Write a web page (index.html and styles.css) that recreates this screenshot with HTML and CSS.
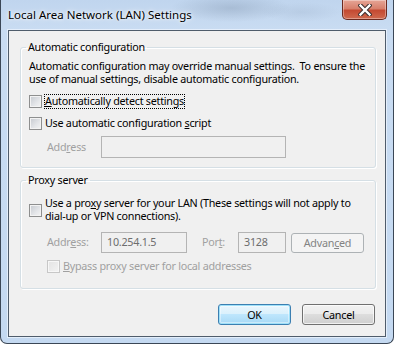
FILE: index.html
```html
<!DOCTYPE html>
<html>
<head>
<meta charset="utf-8">
<title>Local Area Network (LAN) Settings</title>
<link rel="stylesheet" href="styles.css">
</head>
<body>
<div class="window">
  <div class="titlebar">
    <span class="title">Local Area Network (LAN) Settings</span>
    <div class="close">
      <svg width="14" height="12" viewBox="0 0 14 12">
        <path d="M2.5 1.5 L11.5 10.5 M11.5 1.5 L2.5 10.5" stroke="#3b3030" stroke-width="4.4" stroke-linecap="square"/>
        <path d="M2.5 1.5 L11.5 10.5 M11.5 1.5 L2.5 10.5" stroke="#ffffff" stroke-width="2.4" stroke-linecap="square"/>
      </svg>
    </div>
  </div>
  <div class="client">
    <fieldset class="group group-auto">
      <legend>Automatic configuration</legend>
      <div class="group-body">
        <p class="desc">Automatic configuration may override manual settings.&nbsp; To ensure the<br>use of manual settings, disable automatic configuration.</p>
        <div class="check check-detect"><span class="box"></span><span class="text focus"><u>A</u>utomatically detect settings</span></div>
        <div class="check check-script"><span class="box"></span><span class="text">Use automatic configuration <u>s</u>cript</span></div>
        <div class="field-row addr-auto">
          <span class="lbl disabled">Add<u>r</u>ess</span>
          <span class="input input-wide"></span>
        </div>
      </div>
    </fieldset>
    <fieldset class="group group-proxy">
      <legend>Proxy server</legend>
      <div class="group-body">
        <div class="check check-proxy"><span class="box"></span><span class="text multi">Use a pro<u>x</u>y server for your LAN (These settings will not apply to<br>dial-up or VPN connections).</span></div>
        <div class="field-row addr-proxy">
          <span class="lbl disabled lbl-addr">Addr<u>e</u>ss:</span>
          <span class="input input-addr">10.254.1.5</span>
          <span class="lbl disabled lbl-port">Por<u>t</u>:</span>
          <span class="input input-port">3128</span>
          <span class="btn btn-disabled btn-adv">Advan<u>c</u>ed</span>
        </div>
        <div class="check check-bypass disabled"><span class="box box-disabled"></span><span class="text"><u>B</u>ypass proxy server for local addresses</span></div>
      </div>
    </fieldset>
    <div class="buttons">
      <span class="btn btn-default">OK</span>
      <span class="btn">Cancel</span>
    </div>
  </div>
</div>
</body>
</html>
```

FILE: styles.css
```css
* { box-sizing: border-box; }
html, body { margin: 0; padding: 0; }
body {
  width: 394px;
  height: 345px;
  background: #ffffff;
  font-family: "Noto Sans", sans-serif;
  font-size: 10.75px;
  letter-spacing: -0.25px;
  color: #000;
  overflow: hidden;
}
u { text-decoration: underline; text-underline-offset: 1px; }

.window {
  width: 394px;
  height: 344px;
  display: flex;
  flex-direction: column;
  padding: 0 7px 6px 7px;
  border: 1px solid #3b4756;
  border-top: none;
  border-radius: 0 0 7px 7px;
  background:
    radial-gradient(ellipse 60px 14px at 230px 8px, rgba(120,140,165,0.35), rgba(120,140,165,0) 100%),
    radial-gradient(ellipse 40px 10px at 300px 12px, rgba(150,170,195,0.25), rgba(150,170,195,0) 100%),
    linear-gradient(to bottom, #c0d5ee 0px, #c9dcf2 30px, #c4d9f1 100%);
}

.titlebar {
  height: 30px;
  flex: none;
  display: flex;
  align-items: flex-start;
  justify-content: space-between;
}
.title {
  margin-top: 7px;
  line-height: 16px;
  font-size: 11.5px;
  letter-spacing: 0;
  color: #000;
  text-shadow: 0 0 6px #fff, 0 0 3px #fff;
}
.close {
  width: 45px;
  height: 20px;
  margin-right: -1px;
  display: flex;
  align-items: center;
  justify-content: center;
  border: 1px solid #6b2a20;
  border-top: none;
  border-radius: 0 0 5px 5px;
  background: linear-gradient(to bottom, #e6a596 0%, #d7806c 45%, #c44a32 55%, #cf6a4f 100%);
  box-shadow: inset 0 0 0 1px rgba(255,255,255,0.35);
}

.client {
  flex: 1;
  background: #f0f0f0;
  border: 1px solid #4f5c6b;
  box-shadow: 0 0 0 1px rgba(235,243,252,0.8);
  padding: 9px 9px 0 11px;
  display: flex;
  flex-direction: column;
}

.group {
  margin: 0;
  padding: 0;
  min-width: 0;
  width: 356px;
  border: 1px solid #d5dfe5;
  border-radius: 3px;
  box-shadow: inset 1px 1px 0 #fff, 1px 1px 0 #fff;
}
.group legend {
  margin-left: 5px;
  padding: 0 2px;
  line-height: 15px;
}
.group-body {
  padding: 5px 8px 9px 8px;
}
.group-proxy { margin-top: 5px; }
.group-proxy .group-body { padding: 9px 8px 14px 8px; }

.desc {
  margin: 0;
  line-height: 13px;
  white-space: nowrap;
}

.check {
  display: flex;
  align-items: center;
  gap: 2px;
  height: 15px;
  line-height: 13px;
}
.check .text {
  border: 1px solid transparent;
  white-space: nowrap;
}
.check .text.focus { border: 1px dotted #000; }
.check-detect { margin-top: 8px; }
.check-script { margin-top: 7px; }
.check-proxy { height: 26px; }
.check-bypass { margin-top: 6px; margin-left: 18px; color: #a0a0a0; }

.box {
  flex: none;
  width: 13px;
  height: 13px;
  border: 1px solid #8e8f8f;
  background: linear-gradient(135deg, #c5c9cf 0%, #e4e6e9 60%, #f4f4f4 100%);
  box-shadow: inset 0 0 0 1px #f3f3f3;
}
.box-disabled {
  border-color: #c7c7c7;
  background: linear-gradient(135deg, #e3e3e3 0%, #f3f3f3 100%);
  box-shadow: inset 0 0 0 1px #f7f7f7;
}

.field-row {
  display: flex;
  align-items: center;
  margin-left: 18px;
}
.addr-auto { margin-top: 5px; }
.addr-proxy { margin-top: 9px; align-items: flex-start; }
.lbl { width: 54px; line-height: 21px; }
.disabled { color: #a0a0a0; }
.lbl-port { width: 36px; margin-left: 15px; }

.input {
  height: 22px;
  border: 1px solid #b4b4b4;
  background: #f0f0f0;
  color: #6d6d6d;
  padding-left: 5px;
  line-height: 20px;
}
.input-wide { width: 185px; }
.input-addr { width: 86px; height: 21px; line-height: 19px; }
.input-port { width: 48px; height: 21px; line-height: 19px; }

.btn {
  display: flex;
  align-items: center;
  justify-content: center;
  width: 73px;
  height: 21px;
  border: 1px solid #707070;
  border-radius: 3px;
  background: linear-gradient(to bottom, #f2f2f2 0%, #ebebeb 50%, #dddddd 50%, #cfcfcf 100%);
  box-shadow: inset 0 0 0 1px rgba(255,255,255,0.7);
}
.btn-disabled {
  border-color: #adb2b5;
  background: #f4f4f4;
  color: #838383;
  box-shadow: none;
}
.btn-adv { margin-left: 5px; margin-top: 1px; height: 20px; }
.btn-default {
  border-color: #3c7fb1;
  background: linear-gradient(to bottom, #eaf6fd 0%, #d9f0fc 50%, #bee6fd 50%, #a7d9f5 100%);
  box-shadow: inset 0 0 0 1px #9ee0f9, inset 0 0 0 2px rgba(255,255,255,0.4);
}

.buttons {
  display: flex;
  justify-content: flex-end;
  gap: 11px;
  margin-top: 15px;
  margin-right: 1px;
}
```
